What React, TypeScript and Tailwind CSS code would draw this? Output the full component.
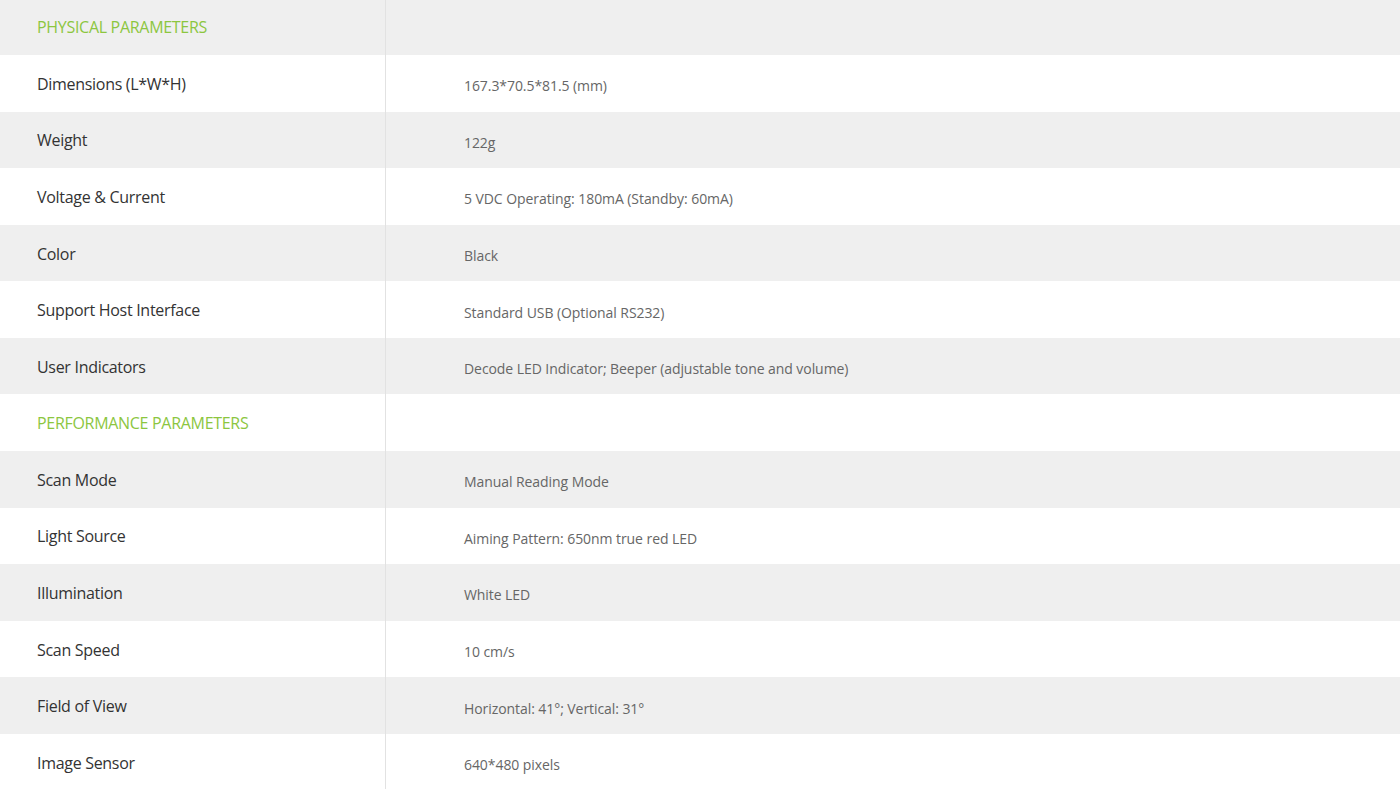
import React from "react";

type Row = { label: string; value?: string; heading?: boolean };

const rows: Row[] = [
  { label: "PHYSICAL PARAMETERS", heading: true },
  { label: "Dimensions (L*W*H)", value: "167.3*70.5*81.5 (mm)" },
  { label: "Weight", value: "122g" },
  { label: "Voltage & Current", value: "5 VDC Operating: 180mA (Standby: 60mA)" },
  { label: "Color", value: "Black" },
  { label: "Support Host Interface", value: "Standard USB (Optional RS232)" },
  { label: "User Indicators", value: "Decode LED Indicator; Beeper (adjustable tone and volume)" },
  { label: "PERFORMANCE PARAMETERS", heading: true },
  { label: "Scan Mode", value: "Manual Reading Mode" },
  { label: "Light Source", value: "Aiming Pattern: 650nm true red LED" },
  { label: "Illumination", value: "White LED" },
  { label: "Scan Speed", value: "10 cm/s" },
  { label: "Field of View", value: "Horizontal: 41°; Vertical: 31°" },
  { label: "Image Sensor", value: "640*480 pixels" },
];

export default function App() {
  return (
    <div
      className="w-[1400px] h-[789px] overflow-hidden bg-white"
      style={{ fontFamily: '"Open Sans", "Noto Sans", sans-serif' }}
    >
      <div className="-mt-[1.6px] flex flex-col">
        {rows.map((r, i) => (
          <div
            key={i}
            className={`flex h-[56.58px] ${i % 2 === 0 ? "bg-[#efefef]" : "bg-white"}`}
          >
            <div className="w-[386px] shrink-0 border-r border-[#e2e2e2] flex items-center pl-[37px] pt-[1px]">
              {r.heading ? (
                <span className="text-[16px] tracking-[-0.3px] text-[#8cc63f]">{r.label}</span>
              ) : (
                <span className="text-[16px] tracking-[-0.3px] text-[#333333]">{r.label}</span>
              )}
            </div>
            <div className="flex-1 flex items-center pl-[78px] pt-[5px]">
              {r.value && (
                <span className="text-[14px] tracking-[-0.07px] text-[#666666]">{r.value}</span>
              )}
            </div>
          </div>
        ))}
      </div>
    </div>
  );
}
